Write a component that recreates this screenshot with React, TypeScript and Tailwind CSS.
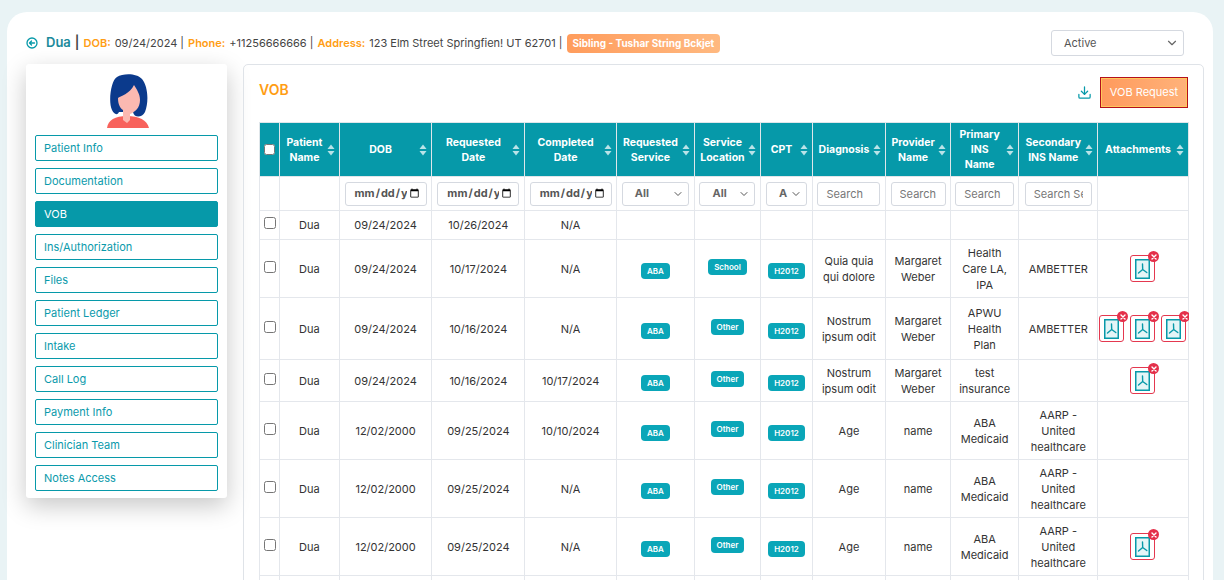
import { ChevronDown, Download } from "lucide-react";

const TEAL = "#0699a9";

const sideItems = [
  "Patient Info",
  "Documentation",
  "VOB",
  "Ins/Authorization",
  "Files",
  "Patient Ledger",
  "Intake",
  "Call Log",
  "Payment Info",
  "Clinician Team",
  "Notes Access",
];

const colWidths = [20, 59, 92, 92, 91, 77, 66, 51, 73, 64, 68, 78, 90, 120];

const headers = [
  ["Patient", "Name"],
  ["DOB"],
  ["Requested", "Date"],
  ["Completed", "Date"],
  ["Requested", "Service"],
  ["Service", "Location"],
  ["CPT"],
  ["Diagnosis"],
  ["Provider", "Name"],
  ["Primary", "INS", "Name"],
  ["Secondary", "INS Name"],
  ["Attachments"],
];

type Row = {
  h: string;
  dob: string;
  req: string;
  done: string;
  pills: boolean;
  service?: string;
  diagnosis?: string[];
  provider?: string[];
  primary?: string[];
  secondary?: string[];
  files: number;
  status?: boolean;
};

const rows: Row[] = [
  { h: "h-[29px]", dob: "09/24/2024", req: "10/26/2024", done: "N/A", pills: false, files: 0 },
  { h: "h-[58px]", dob: "09/24/2024", req: "10/17/2024", done: "N/A", pills: true, service: "School", diagnosis: ["Quia quia", "qui dolore"], provider: ["Margaret", "Weber"], primary: ["Health", "Care LA,", "IPA"], secondary: ["AMBETTER"], files: 1 },
  { h: "h-[62px]", dob: "09/24/2024", req: "10/16/2024", done: "N/A", pills: true, service: "Other", diagnosis: ["Nostrum", "ipsum odit"], provider: ["Margaret", "Weber"], primary: ["APWU", "Health", "Plan"], secondary: ["AMBETTER"], files: 3 },
  { h: "h-[42px]", dob: "09/24/2024", req: "10/16/2024", done: "10/17/2024", pills: true, service: "Other", diagnosis: ["Nostrum", "ipsum odit"], provider: ["Margaret", "Weber"], primary: ["test", "insurance"], files: 1, status: true },
  { h: "h-[58px]", dob: "12/02/2000", req: "09/25/2024", done: "10/10/2024", pills: true, service: "Other", diagnosis: ["Age"], provider: ["name"], primary: ["ABA", "Medicaid"], secondary: ["AARP -", "United", "healthcare"], files: 0, status: true },
  { h: "h-[58px]", dob: "12/02/2000", req: "09/25/2024", done: "N/A", pills: true, service: "Other", diagnosis: ["Age"], provider: ["name"], primary: ["ABA", "Medicaid"], secondary: ["AARP -", "United", "healthcare"], files: 0 },
  { h: "h-[58px]", dob: "12/02/2000", req: "09/25/2024", done: "N/A", pills: true, service: "Other", diagnosis: ["Age"], provider: ["name"], primary: ["ABA", "Medicaid"], secondary: ["AARP -", "United", "healthcare"], files: 1 },
  { h: "h-[58px]", dob: "12/02/2000", req: "09/25/2024", done: "N/A", pills: true, service: "Other", diagnosis: ["Age"], provider: ["name"], primary: ["ABA", "Medicaid"], secondary: ["AARP -", "United", "healthcare"], files: 0 },
];

function SortIcon() {
  return (
    <svg width="8" height="12" viewBox="0 0 8 12" className="shrink-0">
      <path d="M4 0.5 7.5 5H0.5Z" fill="#b9e3e8" />
      <path d="M4 11.5 0.5 7H7.5Z" fill="#b9e3e8" />
    </svg>
  );
}

function Lines({ lines }: { lines?: string[] }) {
  if (!lines) return null;
  return (
    <>
      {lines.map((l) => (
        <div key={l}>{l}</div>
      ))}
    </>
  );
}

function Pill({ label, up }: { label: string; up?: boolean }) {
  return (
    <span
      className={`inline-flex h-4 items-center rounded-[4px] bg-[#0aa6b8] px-[6px] text-[8px] font-semibold text-white ${up ? "-translate-y-[2px]" : "translate-y-[2px]"}`}
    >
      {label}
    </span>
  );
}

function PdfFile() {
  return (
    <div className="relative flex h-[27px] w-[25px] items-center justify-center rounded-[3px] border border-[#e4384f] bg-white">
      <svg width="15" height="20" viewBox="0 0 15 20" fill="none">
        <rect x="0.75" y="0.75" width="13.5" height="18.5" stroke={TEAL} strokeWidth="1.5" fill="#e4f5f7" />
        <path d="M7.5 5 7.7 10.5M7.7 10.5 3.5 14M7.7 10.5 11.8 13.5" stroke={TEAL} strokeWidth="1.4" strokeLinecap="round" />
      </svg>
      <span className="absolute -right-[5px] -top-[5px] flex size-[11px] items-center justify-center rounded-full bg-[#e4304a]">
        <svg width="6" height="6" viewBox="0 0 6 6">
          <path d="M1 1 5 5M5 1 1 5" stroke="white" strokeWidth="1.4" strokeLinecap="round" />
        </svg>
      </span>
    </div>
  );
}

function Attachments({ count }: { count: number }) {
  if (count === 0) return null;
  return (
    <div className="flex flex-wrap justify-center gap-x-[6px]">
      {Array.from({ length: count }).map((_, i) => (
        <PdfFile key={i} />
      ))}
    </div>
  );
}

function Avatar() {
  return (
    <svg width="48" height="54" viewBox="0 0 48 54" className="mx-auto block">
      <path d="M4 54C5 46 12 42 24 42C36 42 44 46 46 54Z" fill="#f8625c" />
      <path d="M9 36C5 28 8 6 14 3C20 -1 34 -1 39 5C45 12 46 28 42 38C39 44 31 44 30 38L16 38C14 42 11 40 9 36Z" fill="#0b3a8c" />
      <path d="M15 24C17 22 27 20 31 11C34 16 37 20 37 26C37 34 32 38 27 40V46L24 49L20 46V36C17 34 15 30 15 24Z" fill="#fbb9b1" />
    </svg>
  );
}

function FilterInput({ placeholder, w }: { placeholder: string; w: string }) {
  return (
    <input
      placeholder={placeholder}
      className={`${w} mx-auto block h-6 rounded-[3px] border border-[#d5d9e0] bg-white px-2 text-[11px] text-[#555] outline-none placeholder:text-[#777]`}
    />
  );
}

function DateFilter() {
  return (
    <input
      type="date"
      className="mx-auto block h-6 w-[82px] rounded-[3px] border border-[#d5d9e0] bg-white pl-2 pr-1 text-[11px] text-[#555] outline-none"
    />
  );
}

function SelectFilter({ label, w }: { label: string; w: string }) {
  return (
    <div className={`${w} mx-auto flex h-6 items-center justify-between rounded-[3px] border border-[#d5d9e0] bg-white pl-3 pr-1 text-[11px] text-[#666]`}>
      <span>{label}</span>
      <ChevronDown className="size-3 text-[#555]" />
    </div>
  );
}

export default function App() {
  return (
    <div className="h-[580px] w-[1224px] overflow-hidden bg-[#e9f3f5] pl-[7px] pr-[11px] pt-3 font-['Inter','Noto_Sans',sans-serif] text-[#333]">
      <div className="h-[600px] rounded-t-[20px] bg-white px-[19px] pt-[18px]">
        {/* patient strip */}
        <div className="flex h-[26px] items-center justify-between pr-[10px]">
          <div className="flex items-center text-[11px] text-[#444]">
            <svg width="12" height="12" viewBox="0 0 12 12" fill="none" className="mr-2" stroke={TEAL} strokeWidth="1.3">
              <circle cx="6" cy="6" r="5" />
              <path d="M8.5 6H3.5M5.5 4 3.5 6 5.5 8" strokeLinecap="round" strokeLinejoin="round" />
            </svg>
            <span className="text-[13px] font-semibold text-[#1c8a9b]">Dua</span>
            <span className="mx-1 text-[13px] font-semibold">|</span>
            <span className="font-semibold text-[#ff9d14]">DOB:</span>
            <span className="ml-1">09/24/2024 |</span>
            <span className="ml-1 font-semibold text-[#ff9d14]">Phone:</span>
            <span className="ml-1">+11256666666 |</span>
            <span className="ml-1 font-semibold text-[#ff9d14]">Address:</span>
            <span className="ml-1">123 Elm Street Springfien! UT 62701 |</span>
            <span className="ml-1 rounded-[4px] bg-gradient-to-r from-[#ff9c5c] to-[#ffb980] px-[6px] py-[2px] text-[10px] font-bold text-white">
              Sibling - Tushar String Bckjet
            </span>
          </div>
          <div className="flex h-[26px] w-[133px] items-center justify-between rounded-[3px] border border-[#d5d9e0] pl-3 pr-1 text-[11px] text-[#555]">
            <span>Active</span>
            <ChevronDown className="size-3.5 text-[#666]" />
          </div>
        </div>

        <div className="mt-[8px] flex items-start gap-[16px]">
          {/* sidebar */}
          <aside className="w-[201px] shrink-0 rounded-[3px] bg-white px-[9px] pb-[7px] pt-[10px] shadow-[0_8px_24px_rgba(0,0,0,0.22)]">
            <Avatar />
            <nav className="mt-[7px] flex flex-col gap-[7px]">
              {sideItems.map((item) => (
                <div
                  key={item}
                  className={`flex h-[26px] items-center rounded-[2px] border border-[#0699a9] px-2 text-[11px] ${item === "VOB" ? "bg-[#0699a9] text-white" : "bg-white text-[#0a9aab]"}`}
                >
                  {item}
                </div>
              ))}
            </nav>
          </aside>

          {/* main panel */}
          <section className="h-[560px] w-[961px] rounded-t-[5px] border border-[#dfe3e8] px-[15px] pt-3">
            <div className="flex h-[45px] items-start justify-between">
              <h2 className="mt-[2px] text-[14px] font-semibold text-[#ff9d14]">VOB</h2>
              <div className="flex items-center gap-[8px]">
                <Download className="size-[15px] text-[#0699a9]" />
                <button
                  type="button"
                  className="h-[31px] w-[88px] border border-[#b40f1c] bg-gradient-to-r from-[#ff9a5c] to-[#ffb27a] text-[11px] text-white outline outline-1 -outline-offset-2 outline-[#ffc95a]"
                >
                  VOB Request
                </button>
              </div>
            </div>

            <div className="w-[930px] overflow-hidden">
              <table className="w-[1051px] table-fixed border-collapse text-center text-[11px] text-[#333]">
                <colgroup>
                  {colWidths.map((w, i) => (
                    <col key={i} style={{ width: w }} />
                  ))}
                </colgroup>
                <thead>
                  <tr className="h-[54px] bg-[#0699a9] text-[10.5px] font-bold text-white">
                    <th className="border border-[#dfe6ea]">
                      <input type="checkbox" className="mx-auto block size-[11px]" />
                    </th>
                    {headers.map((h) => (
                      <th key={h.join()} className="border border-[#dfe6ea] px-1 font-bold">
                        <div className="flex items-center justify-between gap-[2px]">
                          <div className="flex-1 leading-[15px]">
                            <Lines lines={h} />
                          </div>
                          <SortIcon />
                        </div>
                      </th>
                    ))}
                    <th className="border border-[#dfe6ea] px-1 text-left font-bold">Status</th>
                  </tr>
                  <tr className="h-[34px]">
                    <th className="border border-[#e4e7ec]" />
                    <th className="border border-[#e4e7ec]" />
                    <th className="border border-[#e4e7ec]"><DateFilter /></th>
                    <th className="border border-[#e4e7ec]"><DateFilter /></th>
                    <th className="border border-[#e4e7ec]"><DateFilter /></th>
                    <th className="border border-[#e4e7ec]"><SelectFilter label="All" w="w-[67px]" /></th>
                    <th className="border border-[#e4e7ec]"><SelectFilter label="All" w="w-[56px]" /></th>
                    <th className="border border-[#e4e7ec]"><SelectFilter label="A" w="w-[41px]" /></th>
                    <th className="border border-[#e4e7ec] font-normal"><FilterInput placeholder="Search" w="w-[63px]" /></th>
                    <th className="border border-[#e4e7ec] font-normal"><FilterInput placeholder="Search" w="w-[55px]" /></th>
                    <th className="border border-[#e4e7ec] font-normal"><FilterInput placeholder="Search" w="w-[59px]" /></th>
                    <th className="border border-[#e4e7ec] font-normal"><FilterInput placeholder="Search Secondary" w="w-[67px]" /></th>
                    <th className="border border-[#e4e7ec]" />
                    <th className="border border-[#e4e7ec] pl-1 font-normal"><FilterInput placeholder="Search" w="w-[67px] !mx-0" /></th>
                  </tr>
                </thead>
                <tbody className="leading-4">
                  {rows.map((r, i) => (
                    <tr key={i} className={r.h}>
                      <td className="border border-[#e4e7ec]">
                        <input type="checkbox" className="mx-auto block size-3 -translate-y-[2px]" />
                      </td>
                      <td className="border border-[#e4e7ec]">Dua</td>
                      <td className="border border-[#e4e7ec]">{r.dob}</td>
                      <td className="border border-[#e4e7ec]">{r.req}</td>
                      <td className="border border-[#e4e7ec]">{r.done}</td>
                      <td className="border border-[#e4e7ec]">{r.pills && <Pill label="ABA" />}</td>
                      <td className="border border-[#e4e7ec]">{r.service && <Pill label={r.service} up />}</td>
                      <td className="border border-[#e4e7ec]">{r.pills && <Pill label="H2012" />}</td>
                      <td className="border border-[#e4e7ec]"><Lines lines={r.diagnosis} /></td>
                      <td className="border border-[#e4e7ec]"><Lines lines={r.provider} /></td>
                      <td className="border border-[#e4e7ec]"><Lines lines={r.primary} /></td>
                      <td className="border border-[#e4e7ec]"><Lines lines={r.secondary} /></td>
                      <td className="border border-[#e4e7ec]"><Attachments count={r.files} /></td>
                      <td className="border border-[#e4e7ec] pl-1 text-left">
                        {r.status && <span className="block h-4 w-[60px] rounded-[5px] bg-[#17965a]" />}
                      </td>
                    </tr>
                  ))}
                </tbody>
              </table>
            </div>
          </section>
        </div>
      </div>
    </div>
  );
}
